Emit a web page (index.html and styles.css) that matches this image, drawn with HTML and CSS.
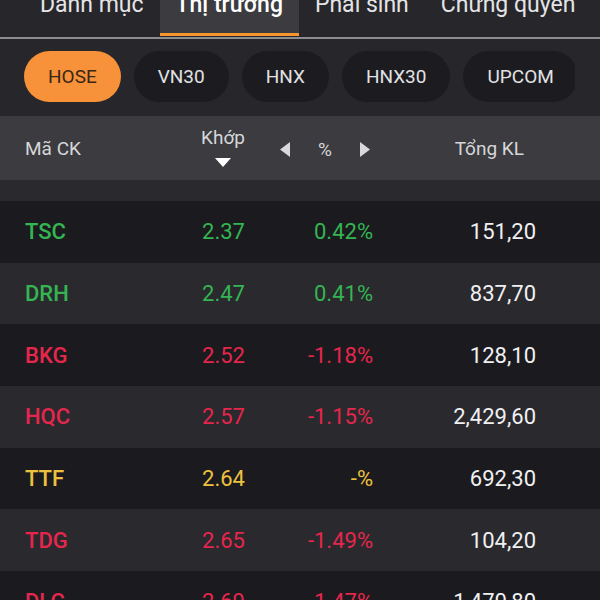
FILE: index.html
```html
<!DOCTYPE html>
<html lang="vi">
<head>
<meta charset="utf-8">
<title>Thị trường</title>
<link rel="stylesheet" href="styles.css">
</head>
<body>
<div class="app">
  <nav class="tabs">
    <div class="tab">Danh mục</div>
    <div class="tab active">Thị trường</div>
    <div class="tab">Phái sinh</div>
    <div class="tab">Chứng quyền</div>
  </nav>

  <div class="pills">
    <span class="pill active">HOSE</span>
    <span class="pill">VN30</span>
    <span class="pill">HNX</span>
    <span class="pill">HNX30</span>
    <span class="pill">UPCOM</span>
  </div>

  <div class="thead grid">
    <div class="th sym">Mã CK</div>
    <div class="th price">
      <span>Khớp</span>
      <svg class="sort" width="16" height="9" viewBox="0 0 16 9"><polygon points="0,0 16,0 8,9" fill="#ffffff"/></svg>
    </div>
    <div class="th pct">
      <svg width="10" height="15" viewBox="0 0 10 15"><polygon points="10,0 10,15 0,7.5" fill="#d9d9dc"/></svg>
      <span class="pct-label">%</span>
      <svg width="10" height="15" viewBox="0 0 10 15"><polygon points="0,0 10,7.5 0,15" fill="#d9d9dc"/></svg>
    </div>
    <div class="th vol">Tổng KL</div>
  </div>

  <div class="spacer"></div>

  <div class="rows">
    <div class="row grid up"><span class="sym">TSC</span><span class="num">2.37</span><span class="num">0.42%</span><span class="num vol">151,20</span></div>
    <div class="row grid up"><span class="sym">DRH</span><span class="num">2.47</span><span class="num">0.41%</span><span class="num vol">837,70</span></div>
    <div class="row grid down"><span class="sym">BKG</span><span class="num">2.52</span><span class="num">-1.18%</span><span class="num vol">128,10</span></div>
    <div class="row grid down"><span class="sym">HQC</span><span class="num">2.57</span><span class="num">-1.15%</span><span class="num vol">2,429,60</span></div>
    <div class="row grid ref"><span class="sym">TTF</span><span class="num">2.64</span><span class="num">-%</span><span class="num vol">692,30</span></div>
    <div class="row grid down"><span class="sym">TDG</span><span class="num">2.65</span><span class="num">-1.49%</span><span class="num vol">104,20</span></div>
    <div class="row grid down"><span class="sym">DLC</span><span class="num">2.69</span><span class="num">-1.47%</span><span class="num vol">1,470,80</span></div>
  </div>
</div>
</body>
</html>
```

FILE: styles.css
```css
* { box-sizing: border-box; }

html, body {
  margin: 0;
  padding: 0;
  background: #26262b;
}

body {
  font-family: Roboto, "Noto Sans", "Liberation Sans", sans-serif;
  color: #e6e6e8;
  overflow: hidden;
}

.app {
  width: 600px;
  height: 600px;
  overflow: hidden;
  background: #26262b;
}

/* ---------- top tabs ---------- */
.tabs {
  display: flex;
  padding-left: 24px;
  padding-bottom: 1px;
  border-bottom: 2px solid #8d8d91;
}

.tab {
  height: 36px;
  padding: 0 16px;
  font-size: 23px;
  line-height: 10px;
  color: #e4e4e6;
  white-space: nowrap;
  border-bottom: 3px solid transparent;
}

.tab.active {
  background: #3b3b40;
  color: #ffffff;
  font-weight: 500;
  border-bottom-color: #f7952f;
}

/* ---------- exchange pills ---------- */
.pills {
  display: flex;
  gap: 13px;
  margin: 12px 25px 0 24px;
  overflow: hidden;
}

.pill {
  flex: none;
  height: 51px;
  padding: 0 24px;
  border-radius: 26px;
  background: #1c1c20;
  color: #e2e2e4;
  font-size: 19px;
  display: flex;
  align-items: center;
}

.pill.active {
  background: #f7923a;
  color: #3a2616;
}

/* ---------- table grid ---------- */
.grid {
  display: grid;
  grid-template-columns: 130px 90px 128px 163px;
  padding: 0 64px 0 25px;
  align-items: center;
}

.thead {
  margin-top: 14px;
  height: 64px;
  background: #3b3b40;
  font-size: 19px;
  color: #d6d6d8;
}

.th.price {
  justify-self: end;
  display: flex;
  flex-direction: column;
  align-items: center;
  gap: 8px;
  line-height: 24px;
  margin-top: -4px;
}

.th.price .sort { display: block; }

.th.pct {
  display: flex;
  justify-content: flex-end;
  align-items: center;
  padding-right: 3px;
  margin-top: 2px;
}

.th.pct svg { display: block; }

.pct-label {
  width: 70px;
  text-align: center;
}

.th.vol {
  text-align: right;
  padding-right: 12px;
}

.spacer {
  height: 21px;
  background: #29292e;
}

/* ---------- rows ---------- */
.row {
  height: 61.67px;
  font-size: 22px;
  background: #1b1b1f;
}

.row:nth-child(even) {
  background: #29292e;
}

.row .sym {
  font-weight: 500;
}

.row .num {
  text-align: right;
}

.row .vol {
  color: #f0f0f2;
}

.up { color: #34b552; }
.down { color: #e6264c; }
.ref { color: #edc13e; }
```
